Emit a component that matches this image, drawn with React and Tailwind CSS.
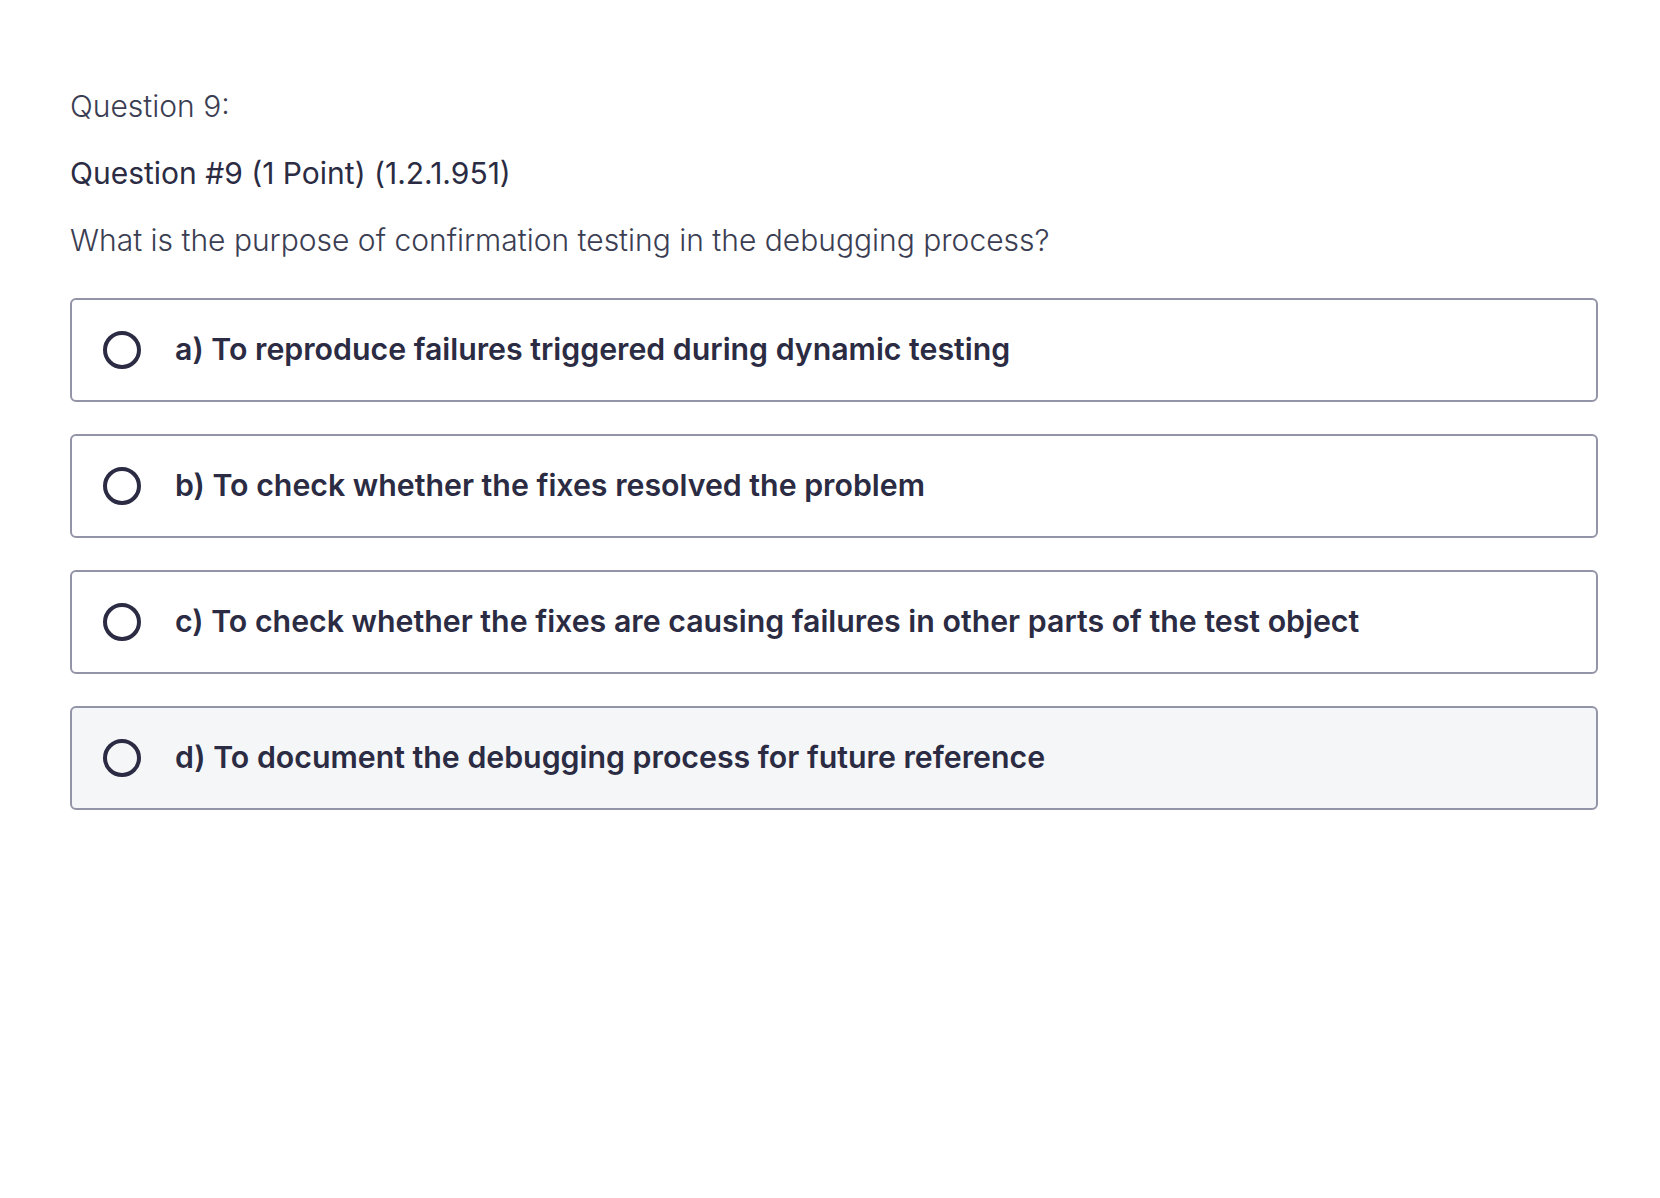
const options = [
  { id: "a", label: "a) To reproduce failures triggered during dynamic testing" },
  { id: "b", label: "b) To check whether the fixes resolved the problem" },
  { id: "c", label: "c) To check whether the fixes are causing failures in other parts of the test object" },
  { id: "d", label: "d) To document the debugging process for future reference", hovered: true },
];

const Radio = () => (
  <span className="h-[38px] w-[38px] shrink-0 rounded-full border-[4px] border-[#2b2c43]" />
);

const Option = ({ label, hovered }) => (
  <label
    className={`flex h-[104px] cursor-pointer items-center rounded-md border-2 border-[#9394a8] pl-[31px] ${
      hovered ? "bg-[#f5f6f8]" : "bg-white"
    }`}
  >
    <Radio />
    <span className="ml-[34px] text-[30.3px] font-semibold text-[#2b2c43]">{label}</span>
  </label>
);

export default function App() {
  return (
    <div
      className="min-h-screen bg-white pl-[70px] pr-[62px] pt-[86px]"
      style={{ fontFamily: "Inter, 'Noto Sans', sans-serif" }}
    >
      <p className="text-[30px] font-light leading-[40px] text-[#3b3d52]">Question 9:</p>
      <p className="mt-[27px] text-[30px] leading-[40px] text-[#2b2c43]">Question #9 (1 Point) (1.2.1.951)</p>
      <p className="mt-[27px] text-[30px] font-light leading-[40px] text-[#3b3d52]">
        What is the purpose of confirmation testing in the debugging process?
      </p>

      <div className="mt-[38px] flex flex-col gap-[32px]">
        {options.map((o) => (
          <Option key={o.id} label={o.label} hovered={o.hovered} />
        ))}
      </div>
    </div>
  );
}
